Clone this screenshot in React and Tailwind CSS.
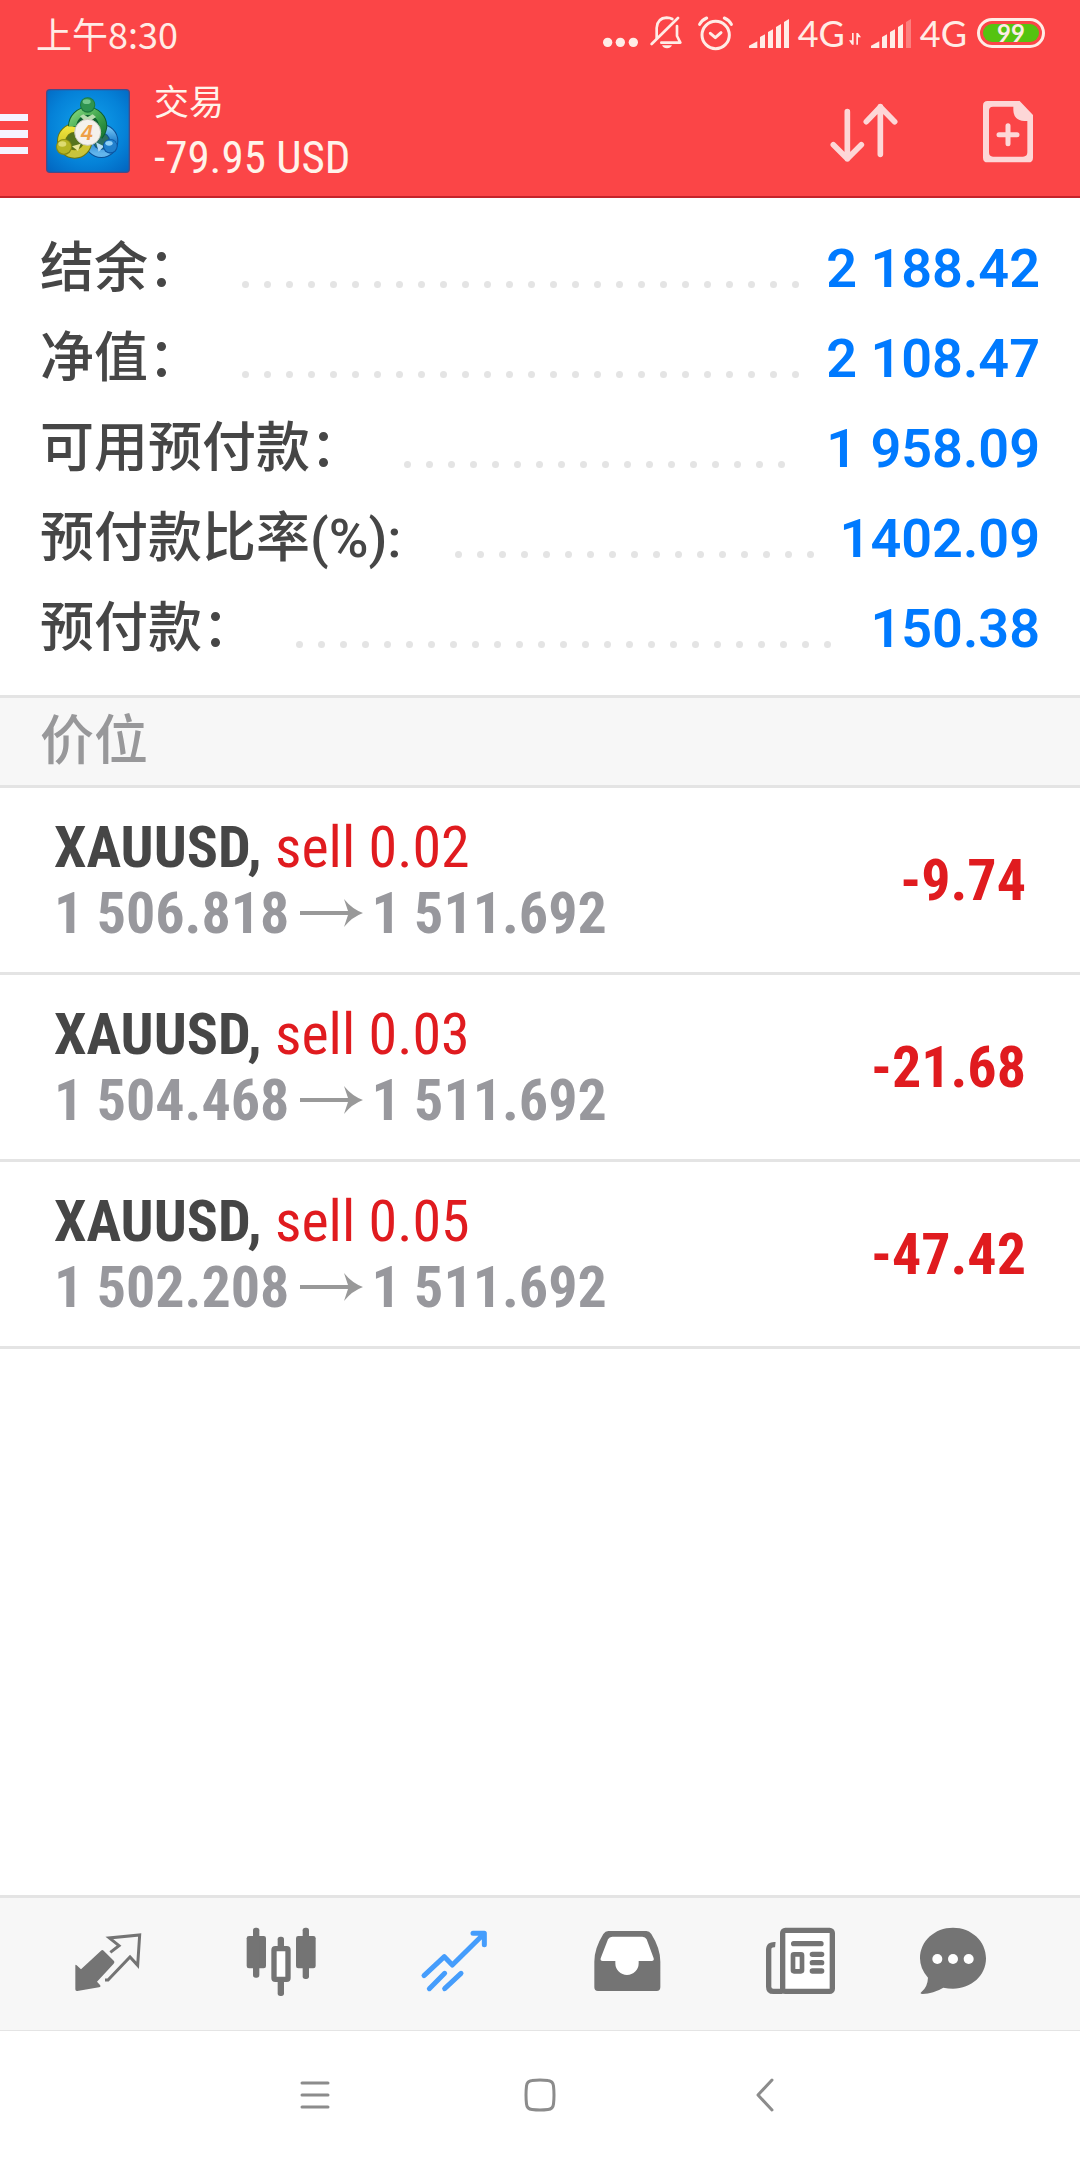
const summary = [
  { label: "结余：", value: "2 188.42" },
  { label: "净值：", value: "2 108.47" },
  { label: "可用预付款：", value: "1 958.09" },
  { label: "预付款比率(%):\u00a0", value: "1402.09" },
  { label: "预付款：", value: "150.38" },
];

const positions = [
  { symbol: "XAUUSD", side: "sell 0.02", open: "1 506.818", current: "1 511.692", profit: "-9.74" },
  { symbol: "XAUUSD", side: "sell 0.03", open: "1 504.468", current: "1 511.692", profit: "-21.68" },
  { symbol: "XAUUSD", side: "sell 0.05", open: "1 502.208", current: "1 511.692", profit: "-47.42" },
];

const DOTS = Array.from({ length: 40 }, (_, i) => i);

function Signal({ weak }) {
  return (
    <svg viewBox="0 0 120 87" className="w-10 h-[29px]" fill="currentColor">
      <path d="M0 87V80L25 67V87Z" />
      <path d="M33 87V54L48 46V87Z" />
      <path d="M57 87V39L72 31V87Z" />
      <path d="M81 87V24L96 15V87Z" />
      <path d="M105 87V9L120 0V87Z" opacity={weak ? 0.35 : 1} />
    </svg>
  );
}

function StatusBar() {
  return (
    <div className="h-[66px] pl-9 pr-[35px] flex items-center justify-between text-[#ffece6]">
      <span className="text-[36px] leading-[48px] font-['Noto_Sans_CJK_SC',sans-serif]">上午8:30</span>
      <div className="flex items-center font-['Lato',sans-serif] text-[36px] leading-[48px]">
        <svg viewBox="0 0 105 90" className="w-[35px] h-[30px] mr-3" fill="currentColor">
          <circle cx="14" cy="73" r="14" />
          <circle cx="52" cy="73" r="14" />
          <circle cx="91" cy="73" r="14" />
        </svg>
        <svg viewBox="0 0 96 102" className="w-8 h-[34px] mr-4" fill="none" stroke="currentColor" strokeWidth="8" strokeLinecap="round" strokeLinejoin="round">
          <path d="M20 66V36Q22 6 50 5Q60 5 67 9" />
          <path d="M81 30V60L91 80H34" />
          <path d="M5 84L84 6" />
          <path d="M36 88H66Q62 97 51 97Q40 97 36 88Z" fill="currentColor" stroke="none" />
        </svg>
        <svg viewBox="0 0 105 105" className="w-[35px] h-[35px] mr-4" fill="none" stroke="currentColor" strokeWidth="9" strokeLinecap="round" strokeLinejoin="round">
          <circle cx="53" cy="57" r="41" />
          <path d="M5 25Q12 12 26 6M100 25Q93 12 79 6" />
          <path d="M37 52L52 65L69 50" />
        </svg>
        <Signal />
        <span className="ml-[9px]">4G</span>
        <svg viewBox="0 0 36 84" className="w-3 h-7 ml-1 mr-[10px]" fill="currentColor">
          <path d="M9 42H14V77H9L0 64H9Z" />
          <path d="M22 77V42H27L36 55H27V77Z" />
        </svg>
        <Signal weak />
        <span className="ml-[9px]">4G</span>
        <div className="ml-[10px] w-[68px] h-[30px] rounded-full border-3 border-current p-[3px]">
          <div className="h-full rounded-full bg-[#55c310] flex items-center justify-center text-[24px] leading-none font-bold">
            99
          </div>
        </div>
      </div>
    </div>
  );
}

function AppLogo() {
  return (
    <svg viewBox="0 0 252 252" className="w-[84px] h-[84px]">
      <defs>
        <radialGradient id="bg" cx="50%" cy="45%" r="75%">
          <stop offset="0" stopColor="#12a4ee" />
          <stop offset="0.6" stopColor="#0582d8" />
          <stop offset="1" stopColor="#0262bd" />
        </radialGradient>
        <linearGradient id="green" x1="0" y1="0" x2="1" y2="1">
          <stop offset="0" stopColor="#7fd47c" />
          <stop offset="0.5" stopColor="#43a84e" />
          <stop offset="1" stopColor="#1b7c36" />
        </linearGradient>
        <linearGradient id="yellow" x1="0" y1="0" x2="0" y2="1">
          <stop offset="0" stopColor="#f0e43c" />
          <stop offset="0.6" stopColor="#d2c92a" />
          <stop offset="1" stopColor="#c8c43e" />
        </linearGradient>
        <linearGradient id="blue" x1="0" y1="0" x2="0" y2="1">
          <stop offset="0" stopColor="#6fc0f2" />
          <stop offset="0.5" stopColor="#2382cf" />
          <stop offset="1" stopColor="#62b5ec" />
        </linearGradient>
      </defs>
      <rect x="2" y="2" width="248" height="248" rx="10" fill="url(#bg)" stroke="#4a4a86" strokeWidth="4" />
      <circle cx="166" cy="156" r="37" fill="#2b6f62" stroke="#0c4f96" strokeWidth="28" />
      <circle cx="166" cy="156" r="37" fill="none" stroke="url(#blue)" strokeWidth="22" />
      <circle cx="86" cy="156" r="39" fill="#56741d" stroke="#6c7610" strokeWidth="28" />
      <circle cx="86" cy="156" r="39" fill="none" stroke="url(#yellow)" strokeWidth="22" />
      <path d="M80 112A44 44 0 1 1 170 112Q168 128 158 140" fill="#15622d" stroke="#0d5f30" strokeWidth="28" />
      <path d="M80 112A44 44 0 1 1 170 112Q168 128 158 140" fill="none" stroke="url(#green)" strokeWidth="22" />
      <path d="M102 82L112 76L125 84L140 76L150 84L136 94H114Z" fill="#b9dcae" />
      <path d="M78 172L104 164L96 186Z" fill="#e9e79a" />
      <path d="M150 160L174 172L158 188Z" fill="#b4dcf5" />
      <circle cx="125" cy="48" r="23" fill="#1d7a3c" />
      <circle cx="125" cy="47" r="20" fill="#2f9450" />
      <ellipse cx="122" cy="38" rx="12" ry="7" fill="#74c78b" />
      <circle cx="54" cy="174" r="24" fill="#858a14" />
      <circle cx="54" cy="173" r="21" fill="#b5b524" />
      <ellipse cx="49" cy="165" rx="12" ry="8" fill="#dedb70" />
      <circle cx="193" cy="172" r="22" fill="#0d57a5" />
      <circle cx="193" cy="171" r="19" fill="#2280cd" />
      <ellipse cx="189" cy="163" rx="11" ry="7" fill="#8fd0f7" />
      <circle cx="125" cy="130" r="39" fill="#f4f1ec" stroke="#c9c9be" strokeWidth="3" />
      <text x="123" y="153" textAnchor="middle" fontFamily="Liberation Sans, sans-serif" fontSize="64" fontWeight="700" fontStyle="italic" fill="#eea046">
        4
      </text>
    </svg>
  );
}

function Header() {
  return (
    <header className="bg-[#fb4547] border-b-2 border-[#c4242b]">
      <StatusBar />
      <div className="h-[130px] flex items-center">
        <button aria-label="Menu" className="w-[46px] pt-1.5 flex flex-col items-start gap-[9px]">
          <span className="w-7 h-[7px] bg-[#f5f3ff]" />
          <span className="w-7 h-[8px] bg-[#f5f3ff]" />
          <span className="w-7 h-[7px] bg-[#f5f3ff]" />
        </button>
        <AppLogo />
        <div className="ml-6 pb-1 flex-1 text-[#fff3ea]">
          <h1 className="text-[35px] leading-[58px] font-['Noto_Sans_CJK_SC',sans-serif]">交易</h1>
          <p className="text-[45px] leading-[58px] font-['Roboto_Condensed','Roboto',sans-serif]">-79.95 USD</p>
        </div>
        <button aria-label="Sort" className="w-36 pt-1 flex justify-center text-[#fdd7d7]">
          <svg viewBox="0 0 204 180" className="w-[68px] h-[60px]" fill="none" stroke="currentColor" strokeWidth="17" strokeLinecap="round" strokeLinejoin="round">
            <path d="M52 26V167M10 125L52 167L94 125" />
            <path d="M151 154V11M109 56L151 12L194 56" />
          </svg>
        </button>
        <button aria-label="New order" className="w-36 pt-0.5 flex justify-center text-[#fdd7d7]">
          <svg viewBox="0 0 150 186" className="w-[50px] h-[62px]">
            <path
              fill="currentColor"
              fillRule="evenodd"
              d="M14 0H110L150 42V170Q150 184 136 184H14Q0 184 0 170V14Q0 0 14 0ZM30 17Q18 17 18 29V154Q18 167 30 167H120Q133 167 133 154V60H124Q92 58 91 28V17Z"
            />
            <path d="M75 74V128M48 101H102" stroke="currentColor" strokeWidth="15" strokeLinecap="round" />
          </svg>
        </button>
      </div>
    </header>
  );
}

function SummaryRow({ label, value }) {
  return (
    <div className="h-[90px] flex items-center text-[54px] leading-[90px]">
      <dt className="font-medium text-[#464646]">{label}</dt>
      <div aria-hidden="true" className="flex-1 h-[7px] mt-[31px] ml-8 mr-4 flex flex-wrap overflow-hidden">
        {DOTS.map((i) => (
          <span key={i} className="w-[22px] h-[7px] flex justify-center">
            <span className="w-[7px] h-[7px] rounded-full bg-[#e4e4e4]" />
          </span>
        ))}
      </div>
      <dd className="font-semibold text-[#007aff]">{value}</dd>
    </div>
  );
}

function Position({ item }) {
  return (
    <li className="h-[187px] px-[54px] flex items-center justify-between border-b-3 border-[#e4e4e4] font-['Roboto_Condensed','Roboto',sans-serif] text-[58px] leading-[66px]">
      <div>
        <p className="text-[#e01b1f]">
          <span className="font-bold text-[#464646]">{item.symbol},</span> {item.side}
        </p>
        <p className="flex items-center font-bold text-[#98989d]">
          {item.open}
          <svg viewBox="0 0 63 28" className="w-[63px] h-7 ml-[11px] mr-2" fill="#999999">
            <path d="M0 12H48L44 0Q52 10 63 14Q52 18 44 28L48 16H0Z" />
          </svg>
          {item.current}
        </p>
      </div>
      <span className="font-bold text-[#e01b1f]">{item.profit}</span>
    </li>
  );
}

function QuotesIcon() {
  return (
    <svg viewBox="91 138 228 228" className="w-[76px] h-[76px]">
      <path fill="currentColor" d="M107 257Q107 252 111 256L124 268L184 212Q188 208 192 212L223 243Q226 247 222 251L172 305L181 315Q185 320 178 322L113 333Q107 334 107 328Z" />
      <path fill="none" stroke="currentColor" strokeWidth="9" d="M212 217L238 197L209 174L300 165L294 256L271 231L205 300H196" />
    </svg>
  );
}

function ChartIcon() {
  return (
    <svg viewBox="609 138 228 228" className="w-[76px] h-[76px]" fill="currentColor">
      <rect x="620" y="168" width="58" height="97" rx="7" />
      <rect x="639" y="143" width="19" height="150" rx="8" />
      <rect x="768" y="168" width="59" height="97" rx="7" />
      <rect x="788" y="143" width="19" height="154" rx="8" />
      <rect x="713" y="170" width="19" height="40" rx="8" />
      <rect x="713" y="295" width="19" height="53" rx="8" />
      <rect x="702" y="206" width="42" height="92" rx="4" fill="#ffffff" stroke="currentColor" strokeWidth="16" />
    </svg>
  );
}

function TradeIcon() {
  return (
    <svg viewBox="1130 138 228 228" className="w-[76px] h-[76px]" fill="none" stroke="currentColor" strokeWidth="15" strokeLinecap="round" strokeLinejoin="round">
      <path d="M1151 287L1212 230L1236 255L1331 161M1298 160H1332V194" />
      <path d="M1167 326L1213 280M1213 326L1262 280" />
    </svg>
  );
}

function HistoryIcon() {
  return (
    <svg viewBox="91 138 228 228" className="w-[76px] h-[76px]">
      <path d="M152 165H254L288 243H240Q236 288 202 288Q168 288 165 243H118Z" fill="#ffffff" />
      <path
        fill="currentColor"
        fillRule="evenodd"
        d="M146 153H260Q269 153 275 162Q302 205 302 245V322Q302 333 291 333H115Q104 333 104 322V245Q104 205 131 162Q137 153 146 153ZM158 170Q149 170 145 178L123 235Q121 243 129 243H167V250A35 35 0 0 0 237 250V243H276Q284 243 282 235L261 178Q257 170 248 170Z"
      />
    </svg>
  );
}

function NewsIcon() {
  return (
    <svg viewBox="611 138 228 228" className="w-[76px] h-[76px]" fill="none" stroke="currentColor" strokeWidth="16">
      <rect x="670" y="151" width="149" height="183" rx="8" fill="#ffffff" />
      <path d="M648 194Q628 192 628 210V320Q628 334 642 334H670" />
      <path d="M703 191H785M759 223H787M759 248H787M759 273H787" strokeLinecap="round" />
      <rect x="701" y="223" width="27" height="51" rx="3" strokeWidth="14" />
    </svg>
  );
}

function ChatIcon() {
  return (
    <svg viewBox="1065 138 228 228" className="w-[76px] h-[76px]">
      <path
        fill="currentColor"
        d="M1179 143C1234 143 1278 183 1278 235C1278 287 1234 326 1179 326Q1165 326 1150 323Q1120 341 1088 342Q1077 341 1085 335Q1103 320 1104 293Q1080 267 1080 235C1080 183 1124 143 1179 143Z"
      />
      <g fill="#ffffff">
        <circle cx="1132" cy="237" r="15" />
        <circle cx="1179" cy="237" r="15" />
        <circle cx="1226" cy="237" r="15" />
      </g>
    </svg>
  );
}

const tabs = [
  { name: "Quotes", icon: QuotesIcon },
  { name: "Chart", icon: ChartIcon },
  { name: "Trade", icon: TradeIcon, active: true },
  { name: "History", icon: HistoryIcon },
  { name: "News", icon: NewsIcon },
];

function App() {
  return (
    <div className="min-h-screen flex flex-col bg-white font-['Roboto','Noto_Sans_CJK_SC',sans-serif]">
      <Header />
      <main className="flex-1">
        <dl className="px-10 pt-[26px] pb-[21px]">
          {summary.map((row) => (
            <SummaryRow key={row.label} label={row.label} value={row.value} />
          ))}
        </dl>
        <h2 className="h-[93px] px-10 border-y-3 border-[#e4e4e4] bg-[#f7f7f7] text-[54px] leading-[87px] font-medium text-[#98989a]">
          价位
        </h2>
        <ul>
          {positions.map((item) => (
            <Position key={item.open} item={item} />
          ))}
        </ul>
      </main>
      <nav className="h-[136px] pl-[21px] pr-[62px] flex items-center border-t-3 border-b border-[#e4e4e4] bg-[#f7f7f7]">
        {tabs.map(({ name, icon: Icon, active }) => (
          <button
            key={name}
            aria-label={name}
            className={active ? "flex-1 flex justify-center text-[#459dfc]" : "flex-1 flex justify-center text-[#747474]"}
          >
            <Icon />
          </button>
        ))}
        <button aria-label="Chat" className="w-[130px] flex justify-center text-[#747474]">
          <ChatIcon />
        </button>
      </nav>
      <div className="h-[129px] pb-0.5 flex items-center justify-center text-[#8c8c8c]">
        <button aria-label="Recent apps" className="w-[225px] flex justify-center">
          <svg viewBox="0 0 30 34" className="w-[30px] h-[34px]" stroke="currentColor" strokeWidth="3" strokeLinecap="round">
            <path d="M2 5H28M2 17H28M2 29H28" />
          </svg>
        </button>
        <button aria-label="Home" className="w-[225px] flex justify-center">
          <svg viewBox="0 0 32 34" className="w-8 h-[34px]" fill="none" stroke="currentColor" strokeWidth="3">
            <path d="M8 2.500Q16 1.500 24 2.500Q29 3 29.500 8Q30.500 17 29.500 26Q29 31 24 31.500Q16 32.500 8 31.500Q3 31 2.500 26Q1.500 17 2.500 8Q3 3 8 2.500Z" />
          </svg>
        </button>
        <button aria-label="Back" className="w-[225px] flex justify-center">
          <svg viewBox="0 0 18 34" className="w-[18px] h-[34px]" fill="none" stroke="currentColor" strokeWidth="3" strokeLinecap="round" strokeLinejoin="round">
            <path d="M16 2L2 17L16 32" />
          </svg>
        </button>
      </div>
    </div>
  );
}

export default App;
